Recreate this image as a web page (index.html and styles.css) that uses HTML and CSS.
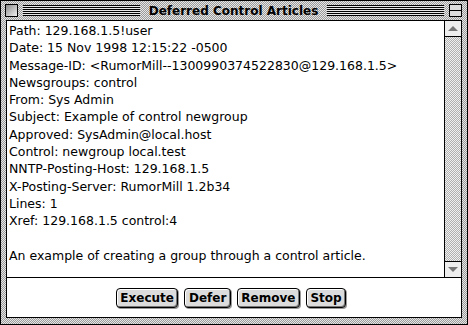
FILE: index.html
```html
<!DOCTYPE html>
<html lang="en">
<head>
    <meta charset="UTF-8">
    <title>Deferred Control Articles</title>
    <link rel="stylesheet" href="styles.css">
</head>
<body>
    <div class="window">
        <div class="titlebar">
            <div class="closebox"></div>
            <div class="stripes"></div>
            <div class="title">Deferred Control Articles</div>
            <div class="stripes"></div>
            <div class="zoombox"></div>
        </div>
        <div class="frame">
            <div class="content">
                <div class="article-pane">
                    <div class="article">
                        <div>Path: 129.168.1.5!user</div>
                        <div>Date: 15 Nov 1998 12:15:22 -0500</div>
                        <div>Message-ID: &lt;RumorMill--1300990374522830@129.168.1.5&gt;</div>
                        <div>Newsgroups: control</div>
                        <div>From: Sys Admin</div>
                        <div>Subject: Example of control newgroup</div>
                        <div>Approved: SysAdmin@local.host</div>
                        <div>Control: newgroup local.test</div>
                        <div>NNTP-Posting-Host: 129.168.1.5</div>
                        <div>X-Posting-Server: RumorMill 1.2b34</div>
                        <div>Lines: 1</div>
                        <div>Xref: 129.168.1.5 control:4</div>
                        <div>&nbsp;</div>
                        <div>An example of creating a group through a control article.</div>
                    </div>
                    <div class="scrollbar">
                        <div class="arrow up"><span></span></div>
                        <div class="track"></div>
                        <div class="arrow down"><span></span></div>
                    </div>
                </div>
                <div class="buttons">
                    <button>Execute</button>
                    <button>Defer</button>
                    <button>Remove</button>
                    <button>Stop</button>
                </div>
            </div>
        </div>
    </div>
</body>
</html>
```

FILE: styles.css
```css
body {
    margin: 0;
    background: #fff;
    font-family: "DejaVu Sans", Verdana, sans-serif;
}

.window {
    width: 466px;
    height: 323px;
    border: 1px solid #000;
    display: flex;
    flex-direction: column;
    background: repeating-conic-gradient(#9a9a9a 0 25%, #e6e6e6 0 50%) 0 0 / 2px 2px;
}

.titlebar {
    height: 19px;
    display: flex;
    align-items: center;
    padding: 0 5px 0 4px;
    gap: 5px;
}

.closebox, .zoombox {
    width: 11px;
    height: 11px;
    border: 1px solid #000;
    background: linear-gradient(135deg, #8a8a8a, #f2f2f2);
    flex: none;
}

.zoombox {
    background: #ddd;
    position: relative;
}

.zoombox::after {
    content: "";
    position: absolute;
    left: 0;
    right: 0;
    top: 5px;
    border-top: 1px solid #000;
}

.stripes {
    flex: 1;
    height: 11px;
    background: repeating-linear-gradient(#000 0 1px, #e8e8e8 1px 2px);
}

.title {
    font-weight: bold;
    font-size: 12px;
    padding: 0 4px;
}

.frame {
    flex: 1;
    padding: 0 5px 6px 5px;
    display: flex;
}

.content {
    flex: 1;
    border: 1px solid #000;
    background: #fff;
    display: flex;
    flex-direction: column;
}

.article-pane {
    height: 256px;
    border-bottom: 1px solid #000;
    display: flex;
}

.article {
    flex: 1;
    padding: 1px 2px;
    font-size: 12.5px;
    line-height: 17.3px;
    white-space: nowrap;
    overflow: hidden;
}

.scrollbar {
    width: 16px;
    border-left: 1px solid #000;
    display: flex;
    flex-direction: column;
}

.arrow {
    height: 15px;
    display: flex;
    align-items: center;
    justify-content: center;
    background: #eee;
}

.arrow.up {
    border-bottom: 1px solid #000;
}

.arrow.down {
    border-top: 1px solid #000;
}

.arrow span {
    width: 0;
    height: 0;
    border-left: 5px solid transparent;
    border-right: 5px solid transparent;
}

.up span {
    border-bottom: 5px solid #777;
}

.down span {
    border-top: 5px solid #777;
}

.track {
    flex: 1;
    background: repeating-conic-gradient(#b0b0b0 0 25%, #f0f0f0 0 50%) 0 0 / 2px 2px;
}

.buttons {
    flex: 1;
    display: flex;
    justify-content: center;
    align-items: center;
    gap: 6px;
    padding-top: 1px;
    padding-right: 6px;
}

button {
    font-family: "DejaVu Sans", Verdana, sans-serif;
    font-weight: bold;
    font-size: 12px;
    padding: 1px 3.5px;
    height: 20px;
    border: 1px solid #000;
    border-radius: 4px;
    background: #dcdcdc;
    box-shadow: inset 1px 1px 0 #fff, inset -1px -1px 0 #777, 1px 1px 0 #999;
    color: #000;
}
```
